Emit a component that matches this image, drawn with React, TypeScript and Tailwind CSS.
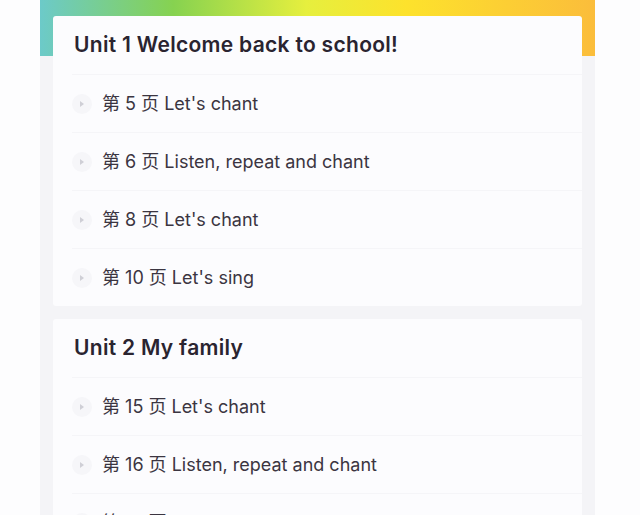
import React from "react";

const units = [
  {
    title: "Unit 1 Welcome back to school!",
    items: ["第 5 页 Let's chant", "第 6 页 Listen, repeat and chant", "第 8 页 Let's chant", "第 10 页 Let's sing"],
  },
  {
    title: "Unit 2 My family",
    items: ["第 15 页 Let's chant", "第 16 页 Listen, repeat and chant", "第 18 页 Let's chant", "第 20 页 Let's sing"],
  },
];

function Tri() {
  return (
    <div className="w-[20px] h-[20px] rounded-full bg-[#f6f6f9] flex items-center justify-center shrink-0">
      <svg width="6" height="8" viewBox="0 0 6 8">
        <path d="M1 1 L5 4 L1 7 Z" fill="#cfcfd6" />
      </svg>
    </div>
  );
}

export default function App() {
  return (
    <div
      className="w-[640px] h-[515px] overflow-hidden bg-[#fdfdfe] flex"
      style={{ fontFamily: 'Inter, "Noto Sans CJK SC", sans-serif' }}
    >
      <div className="ml-[40px] w-[555px] h-full bg-[#f4f4f7] bg-[linear-gradient(90deg,#6ccac9_0%,#86d250_24%,#e6ef3e_48%,#fde22c_66%,#fbbd3b_100%)] bg-no-repeat bg-[length:100%_56px] pt-[16px] px-[13px] flex flex-col gap-[13px]">
        {units.map((u) => (
          <div key={u.title} className="bg-[#fcfcfe] rounded-[3px] flex flex-col shrink-0">
            <div className="h-[58px] flex items-center pl-[21px] text-[21px] font-semibold text-[#2a2430] tracking-[0.3px]">
              {u.title}
            </div>
            {u.items.map((it) => (
              <div key={it} className="h-[58px] ml-[19px] border-t border-[#f5f5f8] flex items-center">
                <Tri />
                <span className="ml-[10px] text-[18px] text-[#3b3541]">{it}</span>
              </div>
            ))}
          </div>
        ))}
      </div>
    </div>
  );
}
